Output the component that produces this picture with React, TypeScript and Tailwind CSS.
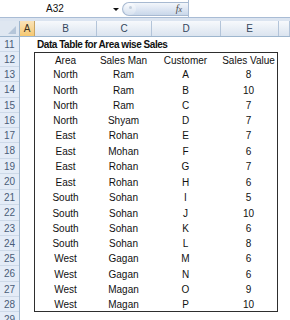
import React from "react";

const font = { fontFamily: '"Liberation Sans", Arial, sans-serif' };

// row number -> pixel height, as measured off the sheet
const heights: Record<number, number> = {
  11: 15, 12: 15, 13: 15, 14: 16, 15: 15, 16: 15, 17: 15, 18: 16, 19: 15,
  20: 16, 21: 15, 22: 16, 23: 15, 24: 15, 25: 15, 26: 16, 27: 15, 28: 15,
};

const data: [number, string, string, string, number][] = [
  [13, "North", "Ram", "A", 8],
  [14, "North", "Ram", "B", 10],
  [15, "North", "Ram", "C", 7],
  [16, "North", "Shyam", "D", 7],
  [17, "East", "Rohan", "E", 7],
  [18, "East", "Mohan", "F", 6],
  [19, "East", "Rohan", "G", 7],
  [20, "East", "Rohan", "H", 6],
  [21, "South", "Sohan", "I", 5],
  [22, "South", "Sohan", "J", 10],
  [23, "South", "Sohan", "K", 6],
  [24, "South", "Sohan", "L", 8],
  [25, "West", "Gagan", "M", 6],
  [26, "West", "Gagan", "N", 6],
  [27, "West", "Magan", "O", 9],
  [28, "West", "Magan", "P", 10],
];

function FormulaBar() {
  return (
    <div className="flex h-[18px] border-b border-[#a9bcd5] bg-white">
      {/* name box */}
      <div className="flex w-[122px] items-center">
        <span className="w-[110px] text-center text-[10px] text-[#111]">A32</span>
        <span className="ml-[3px] mt-[2px] h-0 w-0 border-x-[3px] border-t-[3px] border-x-transparent border-t-[#111]" />
      </div>
      {/* expander pill + fx */}
      <div className="mt-[2px] flex h-[14px] w-[66px] items-center justify-between rounded-l-full border border-r-0 border-[#a7b9d1] bg-gradient-to-b from-[#f3f6fb] to-[#c9d7ea]">
        <span className="ml-[1px] flex h-[12px] w-[12px] items-start justify-start rounded-full bg-gradient-to-b from-[#fbfcfe] to-[#d6e1ef] pl-[5px] pt-[3px]">
          <span className="h-[3px] w-[3px] rounded-full bg-[#c3cfdd]" />
        </span>
        <span
          className="mr-[6px] text-[10px] italic leading-none text-[#4b4b4b]"
          style={{ fontFamily: '"Liberation Serif", serif' }}
        >
          f<span className="text-[8px]">x</span>
        </span>
      </div>
      <div className="flex-1 border-l border-[#a9bcd5] bg-white" />
    </div>
  );
}

function ColumnHeaders() {
  const cell =
    "flex items-center justify-center border-r border-[#b3c4d9] bg-gradient-to-b from-[#f7f9fc] to-[#dbe4ef] text-[10px] text-[#34465c]";
  return (
    <div className="flex h-[16px] border-b border-[#9eb6ce]">
      <div className="relative w-[20px] border-r border-[#9eb6ce] bg-[#dfe7f1]">
        <span className="absolute bottom-[2px] right-[3px] h-0 w-0 border-b-[8px] border-l-[8px] border-b-[#b4c5d9] border-l-transparent" />
      </div>
      <div className="flex w-[15px] items-center justify-center border-r border-[#c9a463] bg-gradient-to-b from-[#fae3b8] to-[#f5c870] text-[10px] text-[#3a3020]">
        A
      </div>
      <div className={`w-[62px] ${cell}`}>B</div>
      <div className={`w-[55px] ${cell}`}>C</div>
      <div className={`w-[69px] ${cell}`}>D</div>
      <div className={`w-[58px] ${cell}`}>E</div>
      <div className={`flex-1 ${cell}`} />
    </div>
  );
}

export default function App() {
  const nums = Object.keys(heights).map(Number);
  return (
    <div className="h-[320px] w-[290px] overflow-hidden bg-white" style={font}>
      <FormulaBar />
      <div className="h-[3px] bg-[#dbe4f0]" />
      <ColumnHeaders />

      <div className="flex">
        {/* row numbers */}
        <div className="w-[20px] shrink-0 border-r border-[#9eb6ce] bg-[#e4ecf7]">
          {nums.map((n) => (
            <div
              key={n}
              className="flex items-center justify-center border-b border-[#cdd9e8] text-[10px] text-[#4a5d78]"
              style={{ height: heights[n] }}
            >
              {n}
            </div>
          ))}
          <div className="flex h-[15px] items-center justify-center text-[10px] text-[#4a5d78]">29</div>
        </div>

        {/* sheet cells: column A is empty */}
        <div className="flex-1 pl-[14px] text-[10px] text-[#111]">
          <div className="flex h-[15px] items-center pl-[3px] font-bold tracking-[-0.45px]">
            Data Table for Area wise Sales
          </div>
          <div className="w-[244px] border border-[#2e2e2e]">
            {[
              [12, "Area", "Sales Man", "Customer", "Sales Value"] as [number, string, string, string, string | number],
              ...data,
            ].map((r, i, all) => {
              const trim = i === 0 || i === all.length - 1 ? 1 : 0;
              return (
                <div
                  key={r[0]}
                  className="grid grid-cols-[61px_55px_69px_57px] items-center text-center"
                  style={{ height: heights[r[0]] - trim }}
                >
                  <span>{r[1]}</span>
                  <span>{r[2]}</span>
                  <span>{r[3]}</span>
                  <span>{r[4]}</span>
                </div>
              );
            })}
          </div>
        </div>
      </div>
    </div>
  );
}
